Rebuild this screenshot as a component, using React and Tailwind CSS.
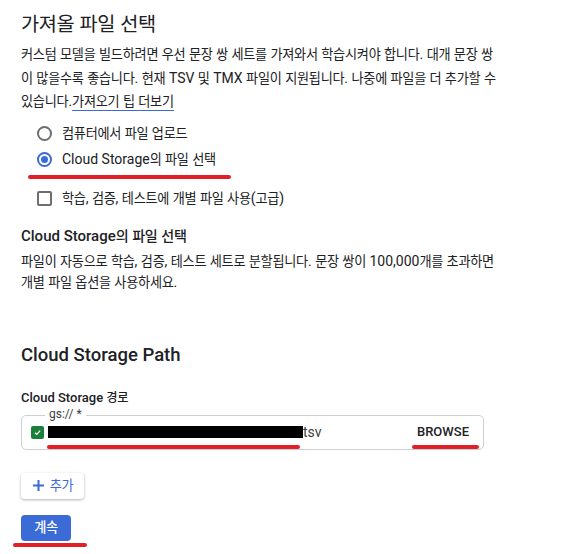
import React from 'react';

const font = { fontFamily: 'Roboto, "Noto Sans CJK KR", sans-serif' };

// 한글 글자 폭을 원본(맑은 고딕)에 가깝게 좁힘
const HANGUL = /([\u3131-\u318E\uAC00-\uD7A3]+)/;
const K = ({ children }) =>
  String(children)
    .split(HANGUL)
    .map((s, i) =>
      i % 2 ? (
        <span key={i} className="text-[0.94em] tracking-[-0.02em]">
          {s}
        </span>
      ) : (
        s
      )
    );

const Radio = ({ checked, label }) => (
  <label className="flex h-[26px] items-center gap-[10px] pl-[16px]">
    {checked ? (
      <span className="flex h-[15px] w-[15px] items-center justify-center rounded-full border-2 border-[#3a6bd6]">
        <span className="h-[7px] w-[7px] rounded-full bg-[#3a6bd6]" />
      </span>
    ) : (
      <span className="h-[15px] w-[15px] rounded-full border-2 border-[#6e6e6e]" />
    )}
    <span className="text-[14px] text-[#202124]">
      <K>{label}</K>
    </span>
  </label>
);

export default function App() {
  return (
    <div className="min-h-[554px] bg-white pl-[21px] pt-[10px] text-[#202124]" style={font}>
      <h1 className="text-[21px] font-normal leading-[28px]">
        <K>가져올 파일 선택</K>
      </h1>
      <p className="mt-[4px] w-[490px] text-[14px] leading-[22.5px]">
        <K>커스텀 모델을 빌드하려면 우선 문장 쌍 세트를 가져와서 학습시켜야 합니다. 대개 문장 쌍</K>
        <br />
        <K>이 많을수록 좋습니다. 현재 TSV 및 TMX 파일이 지원됩니다. 나중에 파일을 더 추가할 수 있습니다.</K>
        <a href="#" className="border-b border-[#3a6bd6] pb-[1px]">
          <K>가져오기 팁 더보기</K>
        </a>
      </p>

      {/* 가져오기 방법 */}
      <div className="mt-[7px]">
        <Radio label="컴퓨터에서 파일 업로드" />
        <Radio checked label="Cloud Storage의 파일 선택" />
        <div className="ml-[7px] mt-[2px] h-[4px] w-[203px] rounded-full bg-[#e21f26]" />
        <label className="mt-[7px] flex h-[26px] items-center gap-[10px] pl-[16px]">
          <span className="h-[15px] w-[15px] rounded-[2px] border-2 border-[#6e6e6e]" />
          <span className="text-[14px]">
            <K>학습, 검증, 테스트에 개별 파일 사용(고급)</K>
          </span>
        </label>
      </div>

      <h2 className="mt-[12px] text-[15px] font-medium leading-[24px]">
        <K>Cloud Storage의 파일 선택</K>
      </h2>
      <p className="mt-[3px] w-[474px] text-[14px] leading-[21px]">
        <K>파일이 자동으로 학습, 검증, 테스트 세트로 분할됩니다. 문장 쌍이 100,000개를 초과하면 개별 파일 옵션을 사용하세요.</K>
      </p>

      <h2 className="mt-[48px] text-[18.5px] font-medium leading-[28px]">Cloud Storage Path</h2>
      <div className="mt-[20px] text-[13px] font-medium leading-[18px]">
        <K>Cloud Storage 경로</K>
      </div>

      <div className="relative mt-[8px] flex h-[35px] w-[463px] items-center rounded-[5px] border border-[#cfcfcf] pl-[9px] pr-[14px]">
        <span className="absolute -top-[10px] left-[23px] bg-white px-[4px] text-[12px] leading-[16px] text-[#3c4043]">gs:// *</span>
        <span className="flex h-[13px] w-[13px] items-center justify-center rounded-[2px] bg-[#188038]">
          <svg viewBox="0 0 12 12" className="h-[9px] w-[9px]">
            <path d="M2.5 6.2 L5 8.5 L9.5 3.5" fill="none" stroke="white" strokeWidth="1.8" />
          </svg>
        </span>
        <span className="ml-[4px] h-[12px] w-[255px] bg-black" />
        <span className="text-[14px] leading-[16px] text-[#3c4043]">tsv</span>
        <span className="ml-auto text-[13px] font-medium">BROWSE</span>
        <span className="absolute left-[25px] top-[29px] h-[4px] w-[253px] rounded-full bg-[#e21f26]" />
        <span className="absolute left-[390px] top-[29px] h-[4px] w-[67px] rounded-full bg-[#e21f26]" />
      </div>

      <button className="mt-[23px] flex h-[26px] w-[63px] items-center justify-center gap-[5px] rounded-[4px] bg-white text-[14px] text-[#3a6bd6] shadow-[0_1px_3px_rgba(0,0,0,0.3)]">
        <svg viewBox="0 0 14 14" className="h-[13px] w-[13px]">
          <path d="M7 1 V13 M1 7 H13" stroke="#3a6bd6" strokeWidth="2.2" />
        </svg>
        <K>추가</K>
      </button>

      <div className="relative mt-[16px] w-[50px]">
        <button className="flex h-[26px] w-[50px] items-center justify-center rounded-[4px] bg-[#3a6bd6] text-[14px] font-medium text-white">
          <K>계속</K>
        </button>
        <span className="absolute -left-[8px] top-[28px] h-[4px] w-[74px] rounded-full bg-[#e21f26]" />
      </div>
    </div>
  );
}
